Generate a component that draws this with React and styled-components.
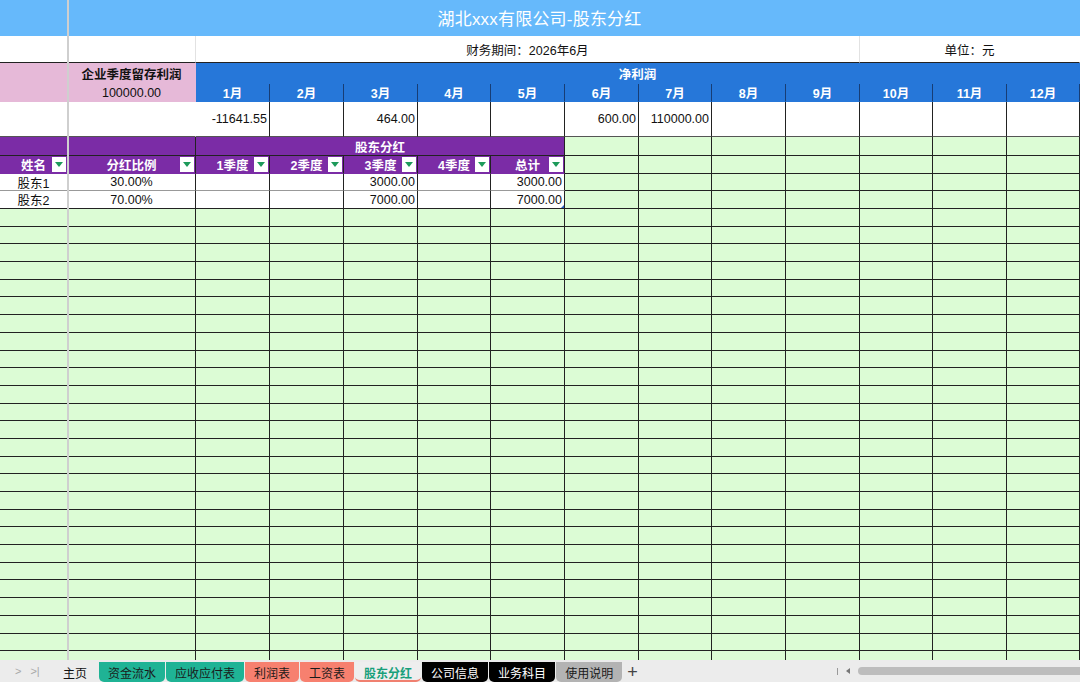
import React from 'react';
import styled, { createGlobalStyle } from 'styled-components';

const COLS = [68, 128, 74, 74, 74, 73, 74, 74, 73, 74, 74, 73, 74, 73];
const MONTHS = ['1月', '2月', '3月', '4月', '5月', '6月', '7月', '8月', '9月', '10月', '11月', '12月'];
const PROFIT = ['-11641.55', '', '464.00', '', '', '600.00', '110000.00', '', '', '', '', ''];
const HEADERS = ['姓名', '分红比例', '1季度', '2季度', '3季度', '4季度', '总计'];
const HOLDERS = [
  ['股东1', '30.00%', '', '', '3000.00', '', '3000.00'],
  ['股东2', '70.00%', '', '', '7000.00', '', '7000.00'],
];
const TABS = [
  { name: '资金流水', kind: 'teal' },
  { name: '应收应付表', kind: 'teal' },
  { name: '利润表', kind: 'salmon' },
  { name: '工资表', kind: 'salmon' },
  { name: '股东分红', kind: 'active' },
  { name: '公司信息', kind: 'black' },
  { name: '业务科目', kind: 'black' },
  { name: '使用说明', kind: 'gray' },
];
const GREEN_ROWS = 26;

const C = {
  title: '#66b9fb',
  pink: '#e6b9d8',
  blue: '#2677d9',
  navy: '#173d75',
  purple: '#7b2ca6',
  green: '#dcfcd5',
  line: '#222',
  faint: '#e2e2e2',
};

const TAB_COLORS = {
  teal: { bg: '#1fb395', fg: '#1a1a1a' },
  salmon: { bg: '#f7806f', fg: '#1a1a1a' },
  black: { bg: '#000', fg: '#fff' },
  gray: { bg: '#b3b3b3', fg: '#1a1a1a' },
  active: { bg: '#eeeeee', fg: '#17a07a' },
};

const GlobalStyle = createGlobalStyle`
  html, body { margin: 0; padding: 0; background: #fff; }
  body { font-family: "Liberation Sans", "Noto Sans CJK SC", sans-serif; }
`;

const Page = styled.div`
  width: 1080px;
  height: 682px;
  display: flex;
  flex-direction: column;
  overflow: hidden;
`;

const SheetArea = styled.div`
  position: relative;
  flex: 1;
  overflow: hidden;
`;

const Sheet = styled.div`
  display: grid;
  grid-template-columns: ${COLS.map((w) => `${w}px`).join(' ')};
  grid-template-rows: 36px 27px 21px 18px 35px 19px 18px 17px 18px repeat(${GREEN_ROWS}, 17.7px);
  font-size: 12.5px;
  color: #111;
`;

const FreezeLine = styled.div`
  position: absolute;
  left: 67px;
  top: 0;
  bottom: 0;
  width: 2px;
  background: #cfcfcf;
`;

const Cell = styled.div`
  grid-column: span ${(p) => p.$span || 1};
  position: relative;
  box-sizing: border-box;
  display: flex;
  align-items: center;
  justify-content: ${(p) => (p.$align === 'right' ? 'flex-end' : 'center')};
  padding: 0 2px;
  background: ${(p) => p.$bg || '#fff'};
  color: ${(p) => p.$color || '#111'};
  font-weight: ${(p) => (p.$bold ? 700 : 400)};
  border-right: 1px solid ${(p) => p.$vr || 'transparent'};
  border-bottom: 1px solid ${(p) => p.$hb || 'transparent'};
  white-space: nowrap;
  overflow: hidden;
`;

const Title = styled(Cell)`
  font-size: 17px;
  color: #fff;
  letter-spacing: 0.2px;
`;

const Filter = styled.span`
  position: absolute;
  right: 1px;
  top: 1px;
  bottom: 1px;
  width: 14px;
  background: #fff;
  display: flex;
  align-items: center;
  justify-content: center;

  &::after {
    content: '';
    border-left: 4px solid transparent;
    border-right: 4px solid transparent;
    border-top: 5px solid #1d9a5a;
  }
`;

const Handle = styled.span`
  position: absolute;
  right: 0;
  bottom: 0;
  width: 0;
  height: 0;
  border-left: 3px solid transparent;
  border-bottom: 3px solid #2b5fc4;
`;

const TabBar = styled.div`
  height: 22px;
  flex-shrink: 0;
  background: #ececec;
  display: flex;
  align-items: flex-end;
  font-size: 12px;
`;

const Nav = styled.div`
  width: 52px;
  height: 22px;
  display: flex;
  align-items: center;
  gap: 9px;
  padding-left: 15px;
  box-sizing: border-box;
  color: #a8a8a8;
  font-size: 11px;
`;

const Tabs = styled.div`
  display: flex;
  gap: 1px;
  align-items: flex-end;
`;

const Tab = styled.div`
  height: 20px;
  padding: 0 9px;
  display: flex;
  align-items: center;
  border-radius: 0 0 5px 5px;
  background: ${(p) => (p.$kind ? TAB_COLORS[p.$kind].bg : 'transparent')};
  color: ${(p) => (p.$kind ? TAB_COLORS[p.$kind].fg : '#111')};
  font-weight: ${(p) => (p.$kind === 'active' ? 700 : 400)};
  box-sizing: border-box;
  border-bottom: ${(p) => (p.$kind === 'active' ? '2px solid #f08070' : 'none')};
  padding-top: ${(p) => (p.$kind === 'active' ? '2px' : '0')};
`;

const HomeTab = styled(Tab)`
  padding: 0 11px;
`;

const Plus = styled.div`
  height: 20px;
  display: flex;
  align-items: center;
  padding-left: 4px;
  color: #444;
  font-size: 18px;
  font-weight: 300;
`;

const Spacer = styled.div`
  flex: 1;
`;

const Scroll = styled.div`
  width: 243px;
  height: 22px;
  display: flex;
  align-items: center;
  gap: 8px;
`;

const ScrollMark = styled.span`
  width: 1px;
  height: 7px;
  background: #999;
`;

const ScrollArrow = styled.span`
  width: 0;
  height: 0;
  border-top: 3px solid transparent;
  border-bottom: 3px solid transparent;
  border-right: 4px solid #777;
`;

const Thumb = styled.div`
  flex: 1;
  height: 8px;
  border-radius: 4px 0 0 4px;
  background: #bdbdbd;
`;

const App = () => {
  const greenRow = (r) =>
    COLS.map((_, i) => (
      <Cell key={`g${r}-${i}`} $bg={C.green} $vr={i === 0 ? 'transparent' : C.line} $hb={C.line} />
    ));

  return (
    <Page>
      <GlobalStyle />
      <SheetArea>
        <Sheet>
          <Title $span={14} $bg={C.title}>湖北xxx有限公司-股东分红</Title>

          <Cell $hb={C.line} />
          <Cell $vr={C.faint} $hb={C.line} />
          <Cell $span={9} $vr={C.faint} $hb={C.line}>财务期间：2026年6月</Cell>
          <Cell $span={3} $hb={C.line}>单位：元</Cell>

          <Cell $bg={C.pink} />
          <Cell $bg={C.pink} $bold>企业季度留存利润</Cell>
          <Cell $span={12} $bg={C.blue} $color="#fff" $bold>净利润</Cell>

          <Cell $bg={C.pink} />
          <Cell $bg={C.pink}>100000.00</Cell>
          {MONTHS.map((m) => (
            <Cell key={m} $bg={C.blue} $color="#fff" $bold $vr={C.navy}>{m}</Cell>
          ))}

          <Cell $hb="#555" />
          <Cell $hb="#555" />
          {PROFIT.map((v, i) => (
            <Cell key={`p${i}`} $align="right" $vr={C.line} $hb="#555">{v}</Cell>
          ))}

          <Cell $bg={C.purple} $hb={C.line} />
          <Cell $bg={C.purple} $vr={C.line} $hb={C.line} />
          <Cell $span={5} $bg={C.purple} $color="#fff" $bold $vr={C.line} $hb={C.line}>股东分红</Cell>
          {COLS.slice(7).map((_, i) => (
            <Cell key={`a${i}`} $bg={C.green} $vr={C.line} $hb={C.line} />
          ))}

          {HEADERS.map((h, i) => (
            <Cell key={h} $bg={C.purple} $color="#fff" $bold $vr={i === 0 ? 'transparent' : C.line}>
              {h}
              <Filter />
            </Cell>
          ))}
          {COLS.slice(7).map((_, i) => (
            <Cell key={`b${i}`} $bg={C.green} $vr={C.line} $hb={C.line} />
          ))}

          {HOLDERS.map((row, r) => (
            <React.Fragment key={row[0]}>
              {row.map((v, i) => (
                <Cell
                  key={`h${r}-${i}`}
                  $align={i > 1 ? 'right' : 'center'}
                  $vr={i === 0 ? 'transparent' : C.line}
                  $hb={r === 0 ? '#999' : C.line}
                >
                  {v}
                  {r === 1 && i === 6 && <Handle />}
                </Cell>
              ))}
              {COLS.slice(7).map((_, i) => (
                <Cell key={`c${r}-${i}`} $bg={C.green} $vr={C.line} $hb={C.line} />
              ))}
            </React.Fragment>
          ))}

          {Array.from({ length: GREEN_ROWS }, (_, r) => (
            <React.Fragment key={`gr${r}`}>{greenRow(r)}</React.Fragment>
          ))}
        </Sheet>
        <FreezeLine />
      </SheetArea>

      <TabBar>
        <Nav>
          <span>&gt;</span>
          <span>&gt;|</span>
        </Nav>
        <Tabs>
          <HomeTab>主页</HomeTab>
          {TABS.map((t) => (
            <Tab key={t.name} $kind={t.kind}>{t.name}</Tab>
          ))}
          <Plus>+</Plus>
        </Tabs>
        <Spacer />
        <Scroll>
          <ScrollMark />
          <ScrollArrow />
          <Thumb />
        </Scroll>
      </TabBar>
    </Page>
  );
};

export default App;
